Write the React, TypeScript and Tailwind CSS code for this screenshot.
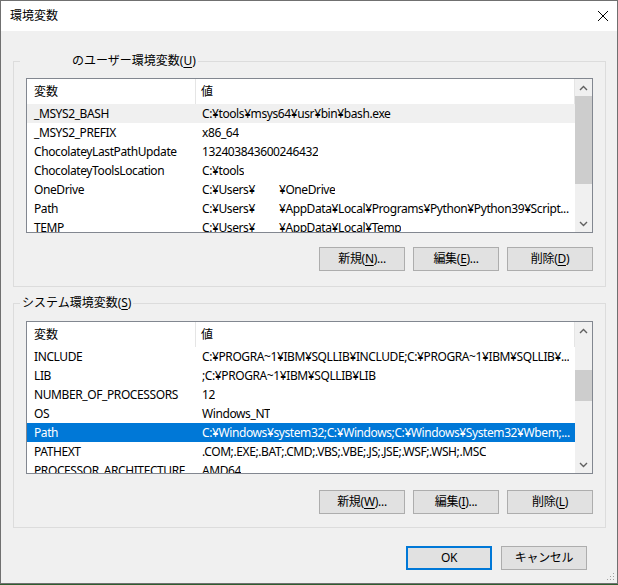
import React from "react";

type Row = { name: string; value: React.ReactNode };

const Gap = () => <span className="inline-block w-[24px]" />;

const userRows: Row[] = [
  { name: "_MSYS2_BASH", value: "C:¥tools¥msys64¥usr¥bin¥bash.exe" },
  { name: "_MSYS2_PREFIX", value: "x86_64" },
  { name: "ChocolateyLastPathUpdate", value: "132403843600246432" },
  { name: "ChocolateyToolsLocation", value: "C:¥tools" },
  { name: "OneDrive", value: <>C:¥Users¥<Gap />¥OneDrive</> },
  { name: "Path", value: <>C:¥Users¥<Gap />¥AppData¥Local¥Programs¥Python¥Python39¥Script...</> },
  { name: "TEMP", value: <>C:¥Users¥<Gap />¥AppData¥Local¥Temp</> },
];

const systemRows: Row[] = [
  { name: "INCLUDE", value: "C:¥PROGRA~1¥IBM¥SQLLIB¥INCLUDE;C:¥PROGRA~1¥IBM¥SQLLIB¥..." },
  { name: "LIB", value: ";C:¥PROGRA~1¥IBM¥SQLLIB¥LIB" },
  { name: "NUMBER_OF_PROCESSORS", value: "12" },
  { name: "OS", value: "Windows_NT" },
  { name: "Path", value: "C:¥Windows¥system32;C:¥Windows;C:¥Windows¥System32¥Wbem;..." },
  { name: "PATHEXT", value: ".COM;.EXE;.BAT;.CMD;.VBS;.VBE;.JS;.JSE;.WSF;.WSH;.MSC" },
  { name: "PROCESSOR_ARCHITECTURE", value: "AMD64" },
];

function Chevron({ down }: { down?: boolean }) {
  return (
    <svg width="9" height="6" viewBox="0 0 9 6" className={down ? "rotate-180" : ""}>
      <path d="M1 5 L4.5 1.5 L8 5" fill="none" stroke="#606060" strokeWidth="1.4" />
    </svg>
  );
}

function VarList({
  rows,
  height,
  thumbTop,
  thumbHeight,
  hover,
  selected,
}: {
  rows: Row[];
  height: string;
  thumbTop: string;
  thumbHeight: string;
  hover?: number;
  selected?: number;
}) {
  return (
    <div className={`flex border border-[#828790] bg-white ${height}`}>
      <div className="flex-1 overflow-hidden">
        <div className="flex h-[25px] items-center border-r border-[#e5e5e5]">
          <div className="w-[169px] h-full flex items-center pl-[7px] border-r border-[#e5e5e5]">変数</div>
          <div className="pl-[5px]">値</div>
        </div>
        {rows.map((r, i) => (
          <div
            key={r.name}
            className={`flex h-[19px] items-center whitespace-nowrap tracking-[-0.4px] ${
              i === selected ? "bg-[#0078d7] text-white" : i === hover ? "bg-[#f0f0f0]" : ""
            }`}
          >
            <div className="w-[169px] pl-[7px] shrink-0">{r.name}</div>
            <div className="pl-[6px] overflow-hidden">{r.value}</div>
          </div>
        ))}
      </div>
      <div className="w-[17px] flex flex-col bg-[#f0f0f0]">
        <div className="h-[17px] flex items-center justify-center">
          <Chevron />
        </div>
        <div className="flex-1 relative">
          <div className={`absolute left-0 right-0 bg-[#cdcdcd] ${thumbTop} ${thumbHeight}`} />
        </div>
        <div className="h-[17px] flex items-center justify-center">
          <Chevron down />
        </div>
      </div>
    </div>
  );
}

function Btn({ label, keyChar, dots, primary }: { label: string; keyChar?: string; dots?: boolean; primary?: boolean }) {
  return (
    <button
      className={`w-[86px] h-[24px] bg-[#e1e1e1] flex items-center justify-center tracking-[-0.3px] ${
        primary ? "border-2 border-[#0078d7]" : "border border-[#adadad]"
      }`}
    >
      {label}
      {keyChar && (
        <>
          (<span className="underline underline-offset-2">{keyChar}</span>)
        </>
      )}
      {dots && "..."}
    </button>
  );
}

function GroupBox({
  legend,
  children,
  className,
}: {
  legend: React.ReactNode;
  children: React.ReactNode;
  className?: string;
}) {
  return (
    <div className={`relative border border-[#dcdcdc] px-[12px] ${className ?? ""}`}>
      <div className="absolute left-[6px] top-[-10px] bg-[#f0f0f0] px-[2px] leading-[18px]">{legend}</div>
      {children}
    </div>
  );
}

export default function App() {
  return (
    <div className="w-[618px] h-[585px] bg-[#2f5e2f] font-['Noto_Sans','Noto_Sans_CJK_JP',sans-serif] text-[12px] text-black">
      <div className="h-[584px] border border-[#707070] bg-[#f0f0f0] flex flex-col relative">
        <div className="h-[30px] bg-white flex items-center justify-between pl-[9px] pr-[8px]">
          <span>環境変数</span>
          <svg width="12" height="12" viewBox="0 0 12 12">
            <path d="M1 1 L11 11 M11 1 L1 11" stroke="#000" strokeWidth="1" />
          </svg>
        </div>

        <div className="pl-[12px] pr-[11px] pt-[30px] flex flex-col">
          <GroupBox
            legend={
              <>
                <span className="inline-block w-[50px]" />
                のユーザー環境変数(<span className="underline underline-offset-2">U</span>)
              </>
            }
            className="pt-[16px] pb-[15px]"
          >
            <VarList rows={userRows} height="h-[155px]" thumbTop="top-0" thumbHeight="h-[88px]" hover={0} />
            <div className="flex justify-end gap-[8px] mt-[14px]">
              <Btn label="新規" keyChar="N" dots />
              <Btn label="編集" keyChar="E" dots />
              <Btn label="削除" keyChar="D" />
            </div>
          </GroupBox>

          <GroupBox
            legend={
              <>
                システム環境変数(<span className="underline underline-offset-2">S</span>)
              </>
            }
            className="mt-[16px] pt-[17px] pb-[13px]"
          >
            <VarList rows={systemRows} height="h-[153px]" thumbTop="top-[31px]" thumbHeight="h-[31px]" selected={4} />
            <div className="flex justify-end gap-[8px] mt-[16px]">
              <Btn label="新規" keyChar="W" dots />
              <Btn label="編集" keyChar="I" dots />
              <Btn label="削除" keyChar="L" />
            </div>
          </GroupBox>

          <div className="flex justify-end gap-[9px] mt-[18px] pr-[19px]">
            <Btn label="OK" primary />
            <Btn label="キャンセル" />
          </div>
        </div>

        <svg width="8" height="8" viewBox="0 0 8 8" className="absolute right-[2px] bottom-[2px]">
          <rect x="6" y="0" width="1" height="1" fill="#a0a0a0" />
          <rect x="3" y="3" width="1" height="1" fill="#a0a0a0" />
          <rect x="6" y="3" width="1" height="1" fill="#a0a0a0" />
          <rect x="0" y="6" width="1" height="1" fill="#a0a0a0" />
          <rect x="3" y="6" width="1" height="1" fill="#a0a0a0" />
          <rect x="6" y="6" width="1" height="1" fill="#a0a0a0" />
        </svg>
      </div>
    </div>
  );
}
